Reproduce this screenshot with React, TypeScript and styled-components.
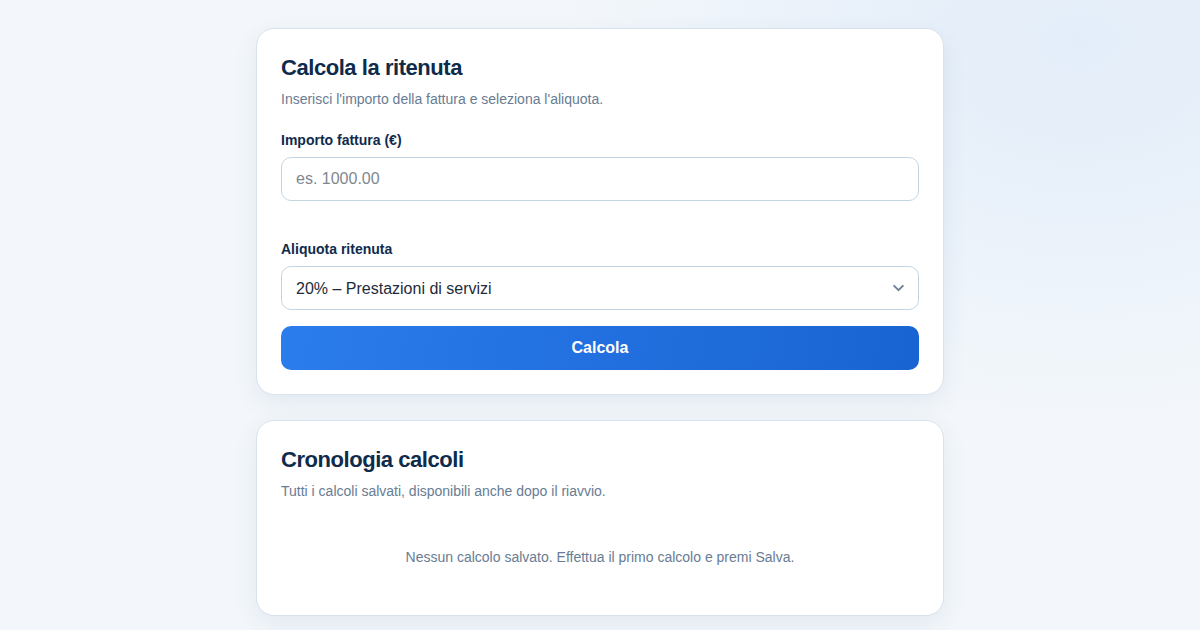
import styled, { createGlobalStyle } from 'styled-components'

const GlobalStyle = createGlobalStyle`
  * {
    box-sizing: border-box;
  }

  html,
  body {
    margin: 0;
    min-height: 100%;
  }

  body {
    font-family: 'Liberation Sans', Arial, sans-serif;
    color: #0f2b4c;
    background-color: #f3f7fb;
    background-image: radial-gradient(
      ellipse 520px 380px at 1080px 40px,
      #e3edf9 0%,
      rgba(227, 237, 249, 0.6) 45%,
      rgba(243, 247, 251, 0) 100%
    );
    min-height: 630px;
  }
`

const Page = styled.main`
  display: flex;
  flex-direction: column;
  align-items: center;
  gap: 25px;

  padding: 28px 0 40px;
`

const Card = styled.section`
  width: 688px;
  padding: 24px;

  background: #ffffff;
  border: 1px solid #d8e3ec;
  border-radius: 18px;
  box-shadow: 0 8px 24px rgba(30, 70, 120, 0.08);
`

const Title = styled.h2`
  margin: 0 0 7px;
  padding-top: 1px;

  font-size: 22px;
  line-height: 28px;
  font-weight: 700;
  letter-spacing: -0.45px;
  color: #0f2b4c;
`

const Subtitle = styled.p<{ $gap?: number }>`
  margin: 0 0 ${(p) => p.$gap ?? 21}px;

  font-size: 14px;
  line-height: 20px;
  color: #687c93;
`

const Field = styled.div<{ $spacing: number }>`
  display: flex;
  flex-direction: column;
  gap: 7px;

  margin-bottom: ${(p) => p.$spacing}px;
`

const Label = styled.label`
  font-size: 14px;
  line-height: 20px;
  font-weight: 700;
  color: #0f2b4c;
`

const Input = styled.input`
  width: 100%;
  height: 44px;
  padding: 0 14px;

  font-family: inherit;
  font-size: 16px;
  color: #1e2b3b;

  background: #ffffff;
  border: 1px solid #c4d5e2;
  border-radius: 10px;
  outline: none;

  &::placeholder {
    color: #80888f;
  }
`

const SelectWrap = styled.div`
  position: relative;

  svg {
    position: absolute;
    top: 50%;
    right: 13px;
    transform: translateY(-50%);
    pointer-events: none;
  }
`

const Select = styled.select`
  width: 100%;
  height: 44px;
  padding: 0 40px 0 14px;

  appearance: none;
  font-family: inherit;
  font-size: 16px;
  color: #1e2b3b;

  background: #ffffff;
  border: 1px solid #c4d5e2;
  border-radius: 10px;
  outline: none;
`

const Button = styled.button`
  display: block;
  width: 100%;
  height: 44px;

  font-family: inherit;
  font-size: 16px;
  font-weight: 700;
  color: #ffffff;

  background: linear-gradient(100deg, #2b7cec 0%, #2270df 50%, #1864d2 100%);
  border: none;
  border-radius: 10px;
  cursor: pointer;
`

const Empty = styled.p`
  margin: 20px 0 0;
  padding: 26px 0 24px;

  text-align: center;
  font-size: 14px;
  line-height: 20px;
  color: #687c93;
`

function Chevron() {
  return (
    <svg width="15" height="15" viewBox="0 0 24 24" fill="none">
      <path
        d="M5 8.5l7 7 7-7"
        stroke="#6a7f95"
        strokeWidth="3"
        strokeLinecap="round"
        strokeLinejoin="round"
      />
    </svg>
  )
}

export default function App() {
  return (
    <>
      <GlobalStyle />
      <Page>
        <Card>
          <Title>Calcola la ritenuta</Title>
          <Subtitle>Inserisci l'importo della fattura e seleziona l'aliquota.</Subtitle>

          <Field $spacing={38}>
            <Label htmlFor="importo">Importo fattura (€)</Label>
            <Input id="importo" type="text" placeholder="es. 1000.00" />
          </Field>

          <Field $spacing={16}>
            <Label htmlFor="aliquota">Aliquota ritenuta</Label>
            <SelectWrap>
              <Select id="aliquota" defaultValue="20">
                <option value="20">20% – Prestazioni di servizi</option>
                <option value="4">4% – Provvigioni agenti</option>
              </Select>
              <Chevron />
            </SelectWrap>
          </Field>

          <Button type="button">Calcola</Button>
        </Card>

        <Card>
          <Title>Cronologia calcoli</Title>
          <Subtitle $gap={0}>Tutti i calcoli salvati, disponibili anche dopo il riavvio.</Subtitle>
          <Empty>Nessun calcolo salvato. Effettua il primo calcolo e premi Salva.</Empty>
        </Card>
      </Page>
    </>
  )
}
